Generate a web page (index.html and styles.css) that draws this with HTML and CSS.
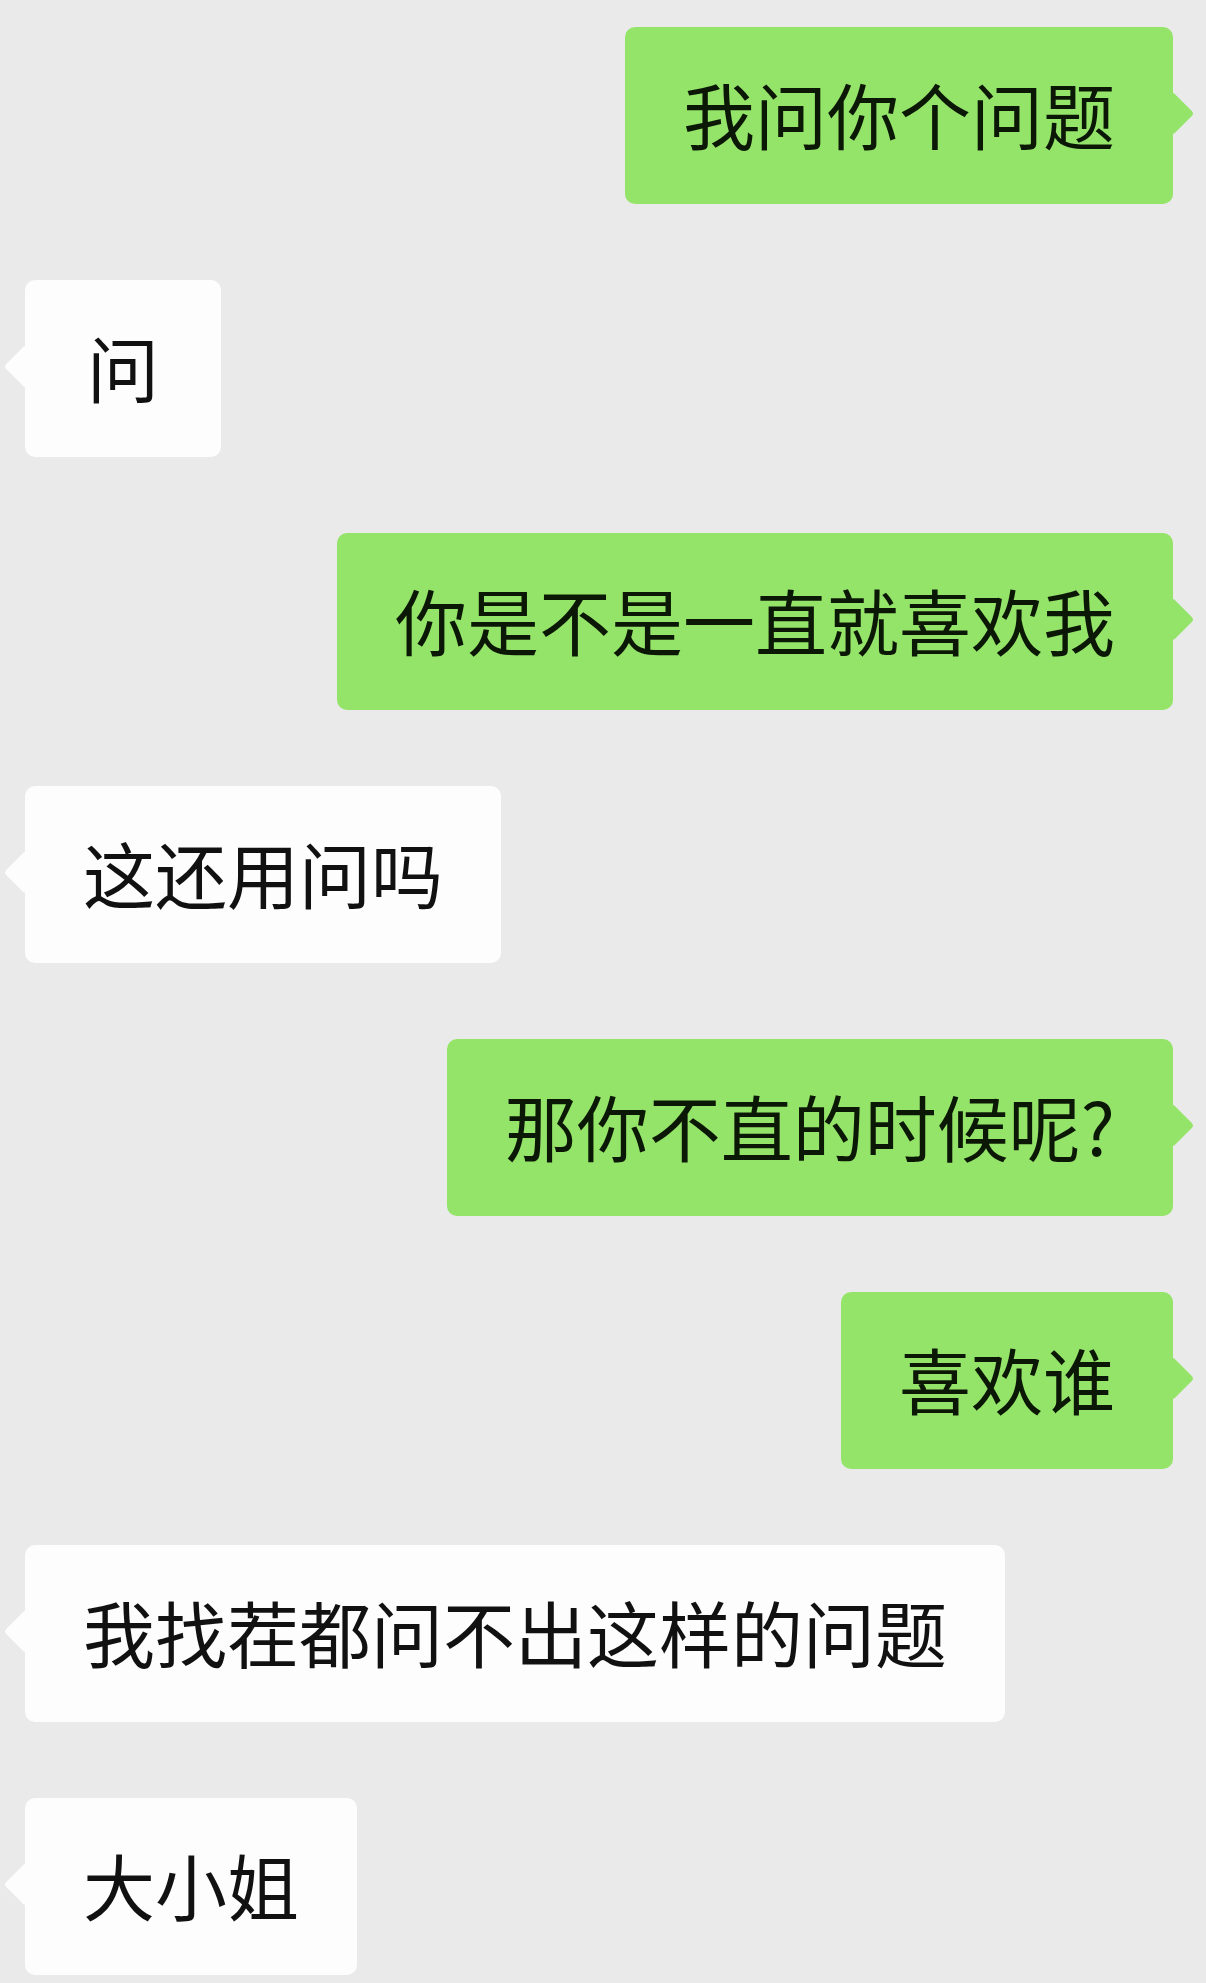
FILE: index.html
```html
<!DOCTYPE html>
<html lang="zh-CN">
<head>
<meta charset="UTF-8">
<meta name="viewport" content="width=device-width, initial-scale=1.0">
<title>聊天记录</title>
<link rel="stylesheet" href="styles.css">
</head>
<body>

<div class="chat">
  <div class="row me"><div class="bubble">我问你个问题</div></div>
  <div class="row other"><div class="bubble">问</div></div>
  <div class="row me"><div class="bubble">你是不是一直就喜欢我</div></div>
  <div class="row other"><div class="bubble">这还用问吗</div></div>
  <div class="row me"><div class="bubble">那你不直的时候呢?</div></div>
  <div class="row me"><div class="bubble">喜欢谁</div></div>
  <div class="row other"><div class="bubble">我找茬都问不出这样的问题</div></div>
  <div class="row other"><div class="bubble">大小姐</div></div>
</div>

</body>
</html>
```

FILE: styles.css
```css
body, html {
  margin: 0;
  background-color: #eaeaea;
  font-family: "Noto Sans CJK SC", "Noto Sans", sans-serif;
}
.chat {
  display: flex;
  flex-direction: column;
  gap: 76px;
  padding: 27px 33px 0 25px;
}
.row {
  display: flex;
}
.row.me {
  justify-content: flex-end;
}
.row.other {
  justify-content: flex-start;
}
.bubble {
  position: relative;
  font-size: 72px;
  line-height: 101px;
  padding: 35px 58px 41px;
  min-width: 80px;
  text-align: center;
  border-radius: 10px;
  color: #111;
  white-space: nowrap;
}
.me .bubble {
  background-color: #95e46a;
  color: #0c1806;
}
.other .bubble {
  background-color: #fdfdfd;
}
/* little tail on the side of each bubble */
.bubble::after {
  content: "";
  position: absolute;
  top: 71px;
  width: 31px;
  height: 31px;
  border-radius: 4px;
  transform: rotate(45deg);
  background-color: inherit;
}
.me .bubble::after {
  right: -15px;
}
.other .bubble::after {
  left: -15px;
}
```
